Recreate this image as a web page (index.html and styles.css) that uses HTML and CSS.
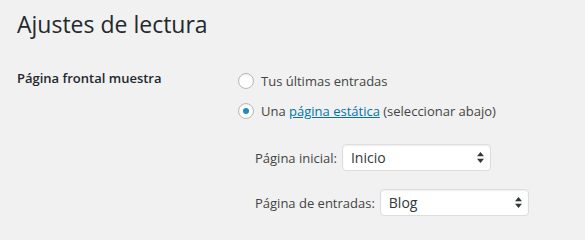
FILE: index.html
```html
<!DOCTYPE html>
<html lang="es">
<head>
<meta charset="utf-8">
<title>Ajustes de lectura</title>
<link rel="stylesheet" href="styles.css">
</head>
<body>
<div class="wrap">
  <h1 class="title">Ajustes de lectura</h1>
  <div class="form-row">
    <div class="row-label">Página frontal muestra</div>
    <div class="row-field">
      <div class="radio-line">
        <span class="radio"></span>
        <span class="radio-text">Tus últimas entradas</span>
      </div>
      <div class="radio-line">
        <span class="radio checked"></span>
        <span class="radio-text">Una <a class="link" href="#">página estática</a> (seleccionar abajo)</span>
      </div>
      <div class="sub-list">
        <div class="sub-row">
          <span class="sub-label">Página inicial:</span>
          <div class="select">
            <span class="select-value">Inicio</span>
            <svg class="select-arrows" width="7" height="11" viewBox="0 0 7 11"><path d="M3.5 0 L7 4.2 H0 Z M0 6.8 H7 L3.5 11 Z" fill="#32373c"/></svg>
          </div>
        </div>
        <div class="sub-row">
          <span class="sub-label">Página de entradas:</span>
          <div class="select">
            <span class="select-value">Blog</span>
            <svg class="select-arrows" width="7" height="11" viewBox="0 0 7 11"><path d="M3.5 0 L7 4.2 H0 Z M0 6.8 H7 L3.5 11 Z" fill="#32373c"/></svg>
          </div>
        </div>
      </div>
    </div>
  </div>
</div>
</body>
</html>
```

FILE: styles.css
```css
html, body {
  margin: 0;
  padding: 0;
  background: #f1f1f1;
}

body {
  font-family: "Open Sans", "Liberation Sans", sans-serif;
  font-size: 13px;
  color: #444;
}

.wrap {
  padding: 10px 0 0 17px;
}

.title {
  margin: 0;
  font-size: 23px;
  font-weight: 400;
  line-height: 29px;
  color: #23282d;
}

.form-row {
  display: flex;
  margin-top: 29px;
}

.row-label {
  width: 221px;
  flex: none;
  font-weight: 600;
  line-height: 20px;
  color: #23282d;
}

.row-field {
  display: flex;
  flex-direction: column;
  margin-top: -2px;
}

.radio-line {
  display: flex;
  align-items: center;
  height: 30px;
  line-height: 30px;
}

.radio {
  box-sizing: border-box;
  width: 16px;
  height: 16px;
  margin: 0 7px 0 0;
  border: 1px solid #b4b9be;
  border-radius: 50%;
  background: #fff;
  box-shadow: inset 0 1px 2px rgba(0, 0, 0, 0.07);
  display: flex;
  align-items: center;
  justify-content: center;
  flex: none;
}

.radio.checked::before {
  content: "";
  width: 6px;
  height: 6px;
  border-radius: 50%;
  background: #1e8cbe;
}

.link {
  color: #0073aa;
  text-decoration: underline;
}

.sub-list {
  display: flex;
  flex-direction: column;
  gap: 18px;
  margin: 18px 0 0 17px;
}

.sub-row {
  display: flex;
  align-items: center;
  gap: 5px;
}

.sub-label {
  line-height: 20px;
  margin-top: 1px;
}

.select {
  box-sizing: border-box;
  width: 149px;
  height: 27px;
  border: 1px solid #ddd;
  border-radius: 4px;
  background: #fff;
  box-shadow: inset 0 1px 2px rgba(0, 0, 0, 0.07);
  display: flex;
  align-items: center;
  justify-content: space-between;
  padding: 0 6px 0 8px;
}

.select-value {
  color: #32373c;
  font-size: 14px;
  line-height: 20px;
}

.select-arrows {
  display: block;
}
```
